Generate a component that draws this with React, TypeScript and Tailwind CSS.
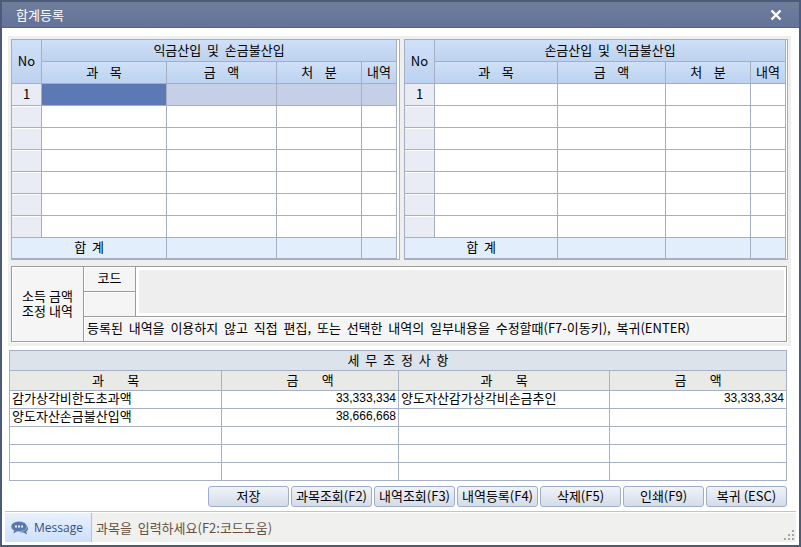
import { clsx } from "clsx";

type Side = {
  id: string;
  title: string;
  selected: boolean;
  wrap: string;
  amount: string;
};

type Adjustment = {
  leftName: string;
  leftAmount: string;
  rightName: string;
  rightAmount: string;
};

const SIDES: Side[] = [
  { id: "add", title: "익금산입  및  손금불산입", selected: true, wrap: "pr-[2px]", amount: "w-[110px]" },
  { id: "deduct", title: "손금산입  및  익금불산입", selected: false, wrap: "pr-px", amount: "w-[108px]" },
];

const ROWS = [1, 2, 3, 4, 5, 6, 7];

const ADJUSTMENTS: Adjustment[] = [
  { leftName: "감가상각비한도초과액", leftAmount: "33,333,334", rightName: "양도자산감가상각비손금추인", rightAmount: "33,333,334" },
  { leftName: "양도자산손금불산입액", leftAmount: "38,666,668", rightName: "", rightAmount: "" },
  { leftName: "", leftAmount: "", rightName: "", rightAmount: "" },
  { leftName: "", leftAmount: "", rightName: "", rightAmount: "" },
  { leftName: "", leftAmount: "", rightName: "", rightAmount: "" },
];

const ACTIONS = ["저장", "과목조회(F2)", "내역조회(F3)", "내역등록(F4)", "삭제(F5)", "인쇄(F9)", "복귀 (ESC)"];

function EntryGrid({ side }: { side: Side }) {
  const line = "border-r border-b border-[#a6aec4] px-0 pt-0 pb-[2px]";
  const head = clsx(line, "bg-linear-to-b from-[#cfe0f8] to-[#bdd2ef] font-normal whitespace-pre");
  const foot = clsx(line, "bg-[#e2eefc]");

  return (
    <div className={clsx("border border-[#a6aec4] bg-white", side.wrap)}>
      <table className="w-full table-fixed border-separate border-spacing-0 text-center">
        <colgroup>
          <col className="w-[30px]" />
          <col />
          <col className={side.amount} />
          <col className="w-[85px]" />
          <col className="w-[35px]" />
        </colgroup>
        <thead>
          <tr className="h-[22px]">
            <th rowSpan={2} className={head}>No</th>
            <th colSpan={4} className={head}>{side.title}</th>
          </tr>
          <tr className="h-[22px]">
            <th className={head}>과    목</th>
            <th className={head}>금    액</th>
            <th className={head}>처    분</th>
            <th className={head}>내역</th>
          </tr>
        </thead>
        <tbody>
          {ROWS.map((row) => {
            const active = side.selected && row === 1;
            const cell = clsx(line, active && "bg-[#c5d0e8]");
            return (
              <tr key={row} className="h-[22px]">
                <td className={clsx(line, "bg-[#e9ecf5]", row > 1 && "shadow-[inset_0_1px_0_#fff]")}>
                  {row === 1 ? "1" : ""}
                </td>
                <td className={clsx(line, active && "bg-[#5c79b5]")} />
                <td className={cell} />
                <td className={cell} />
                <td className={cell} />
              </tr>
            );
          })}
        </tbody>
        <tfoot>
          <tr className="h-[21px]">
            <td colSpan={2} className={clsx(foot, "whitespace-pre")}>합  계</td>
            <td className={foot} />
            <td className={foot} />
            <td className={foot} />
          </tr>
        </tfoot>
      </table>
    </div>
  );
}

function MemoTable() {
  const cell = "border-r border-b border-[#9c9c9c] bg-[#f5f5f5] p-0 shadow-[inset_1px_1px_0_#fff]";

  return (
    <table className="w-full table-fixed border-separate border-spacing-0 border-t border-l border-[#9c9c9c] shadow-[1px_1px_0_#fff]">
      <colgroup>
        <col className="w-[72px]" />
        <col className="w-[52px]" />
        <col />
      </colgroup>
      <tbody>
        <tr className="h-[25px]">
          <th rowSpan={3} className={clsx(cell, "pb-[2px] text-center leading-[15px] font-normal")}>
            소득 금액
            <br />
            조정 내역
          </th>
          <th className={clsx(cell, "pb-[2px] text-center font-normal")}>
            <label htmlFor="code">코드</label>
          </th>
          <td rowSpan={2} className="border-r border-b border-[#9c9c9c] bg-white py-[3px] pr-[2px] pl-[3px]">
            <textarea aria-label="조정 내역" className="block h-[43px] w-full resize-none bg-[#eee] outline-none" />
          </td>
        </tr>
        <tr className="h-[25px]">
          <td className={cell}>
            <input id="code" type="text" className="block h-4 w-full bg-transparent px-1 outline-none" />
          </td>
        </tr>
        <tr className="h-[25px]">
          <td colSpan={2} className={clsx(cell, "pb-[2px] pl-[3px] whitespace-pre")}>
            등록된  내역을  이용하지  않고  직접  편집,  또는  선택한  내역의  일부내용을  수정할때(F7-이동키),  복귀(ENTER)
          </td>
        </tr>
      </tbody>
    </table>
  );
}

function AdjustmentTable() {
  const line = "border-r border-b border-[#a6b0c6] p-0";
  const head = clsx(line, "bg-[#e9eae6] pb-[2px] text-center font-normal whitespace-pre");
  const name = clsx(line, "pl-[2px] align-top leading-[14px]");
  const amount = clsx(line, "pr-[2px] text-right align-top font-['Liberation_Sans',sans-serif] text-xs leading-[15px]");

  return (
    <table className="w-full table-fixed border-separate border-spacing-0 border-t border-l border-[#a6b0c6]">
      <colgroup>
        <col className="w-[212px]" />
        <col className="w-[177px]" />
        <col />
        <col className="w-[177px]" />
      </colgroup>
      <thead>
        <tr className="h-5">
          <th colSpan={4} className={clsx(line, "bg-[#dce3ea] pb-[2px] text-center font-normal whitespace-pre")}>
            세  무  조  정  사  항
          </th>
        </tr>
        <tr className="h-5">
          <th className={head}>과        목</th>
          <th className={head}>금        액</th>
          <th className={head}>과        목</th>
          <th className={head}>금        액</th>
        </tr>
      </thead>
      <tbody>
        {ADJUSTMENTS.map((a, i) => (
          <tr key={i} className="h-[18px]">
            <td className={name}>{a.leftName}</td>
            <td className={amount}>{a.leftAmount}</td>
            <td className={name}>{a.rightName}</td>
            <td className={amount}>{a.rightAmount}</td>
          </tr>
        ))}
      </tbody>
    </table>
  );
}

function ChatIcon() {
  return (
    <svg width="18" height="14" viewBox="0 0 18 14" aria-hidden="true">
      <path d="M11 3.500c3.700 0 6 1.500 6 4 0 1.300-.600 2.300-1.700 3l.7 3-3.500-2c-3.500.300-6-1-6-3.300z" fill="#5a78ab" />
      <ellipse cx="8" cy="5.500" rx="8" ry="5.200" fill="#5a78ab" stroke="#dce9fb" strokeWidth="0.500" />
      <path d="M3 9l-.5 3.500 4-2.500z" fill="#5a78ab" />
      <path d="M4 4.500h2v2h-2zM7 4.500h2v2h-2zM10 4.500h2v2h-2z" fill="#e6effc" />
    </svg>
  );
}

function ResizeGrip() {
  return (
    <svg width="11" height="11" viewBox="0 0 11 11" aria-hidden="true">
      <path
        d="M8 0h2v2h-2zM8 4h2v2h-2zM4 4h2v2h-2zM8 8h2v2h-2zM4 8h2v2h-2zM0 8h2v2h-2z"
        fill="#a5a5a5"
      />
    </svg>
  );
}

export default function App() {
  return (
    <div className="border-2 border-[#4c5a7c] bg-white font-['Noto_Sans_CJK_KR',sans-serif] text-[13px] leading-4 text-black">
      <header className="flex h-[26px] items-center justify-between border-b border-[#55648a] bg-linear-to-b from-[#707e9b] to-[#63739a] pr-[17px] pl-[14px] text-white">
        <h1>합계등록</h1>
        <button type="button" aria-label="닫기">
          <svg width="12" height="12" viewBox="0 0 12 12" aria-hidden="true">
            <path d="M1.500 1.500l9 9M10.500 1.500l-9 9" stroke="#fff" strokeWidth="2.400" />
          </svg>
        </button>
      </header>

      <main className="pt-2">
        <section className="mr-2 ml-[6px] bg-[#efefef] px-[3px] pt-[3px] pb-1">
          <div className="grid grid-cols-[389fr_384fr] gap-1">
            {SIDES.map((side) => (
              <EntryGrid key={side.id} side={side} />
            ))}
          </div>
          <div className="mt-[6px] pr-px">
            <MemoTable />
          </div>
        </section>

        <section className="mt-1 mr-3 ml-[7px]">
          <AdjustmentTable />
        </section>

        <div className="mt-[5px] mr-3 flex justify-end gap-[2px]">
          {ACTIONS.map((label) => (
            <button
              key={label}
              type="button"
              className="h-[21px] w-[81px] rounded-[3px] border border-[#9dadcb] bg-linear-to-b from-[#f0f3f8] to-[#d5dce8] pb-px text-center whitespace-nowrap"
            >
              {label}
            </button>
          ))}
        </div>
      </main>

      <footer className="mx-[3px] mt-1 mb-[3px] border-t border-[#c3c3c7] pt-px">
        <div className="flex h-[29px] bg-[#f0f0ef]">
          <div className="flex w-[87px] items-center gap-[5px] border-r border-[#b9bfca] bg-linear-to-b from-[#e8f1fd] to-[#cfe0fa] pl-[6px] font-['Open_Sans',sans-serif] text-xs text-[#3b4f7d]">
            <ChatIcon />
            Message
          </div>
          <p className="flex-1 self-center pl-1 whitespace-pre text-[#66503f]">과목을  입력하세요(F2:코드도움)</p>
          <div className="self-end pr-px pb-px">
            <ResizeGrip />
          </div>
        </div>
      </footer>
    </div>
  );
}
